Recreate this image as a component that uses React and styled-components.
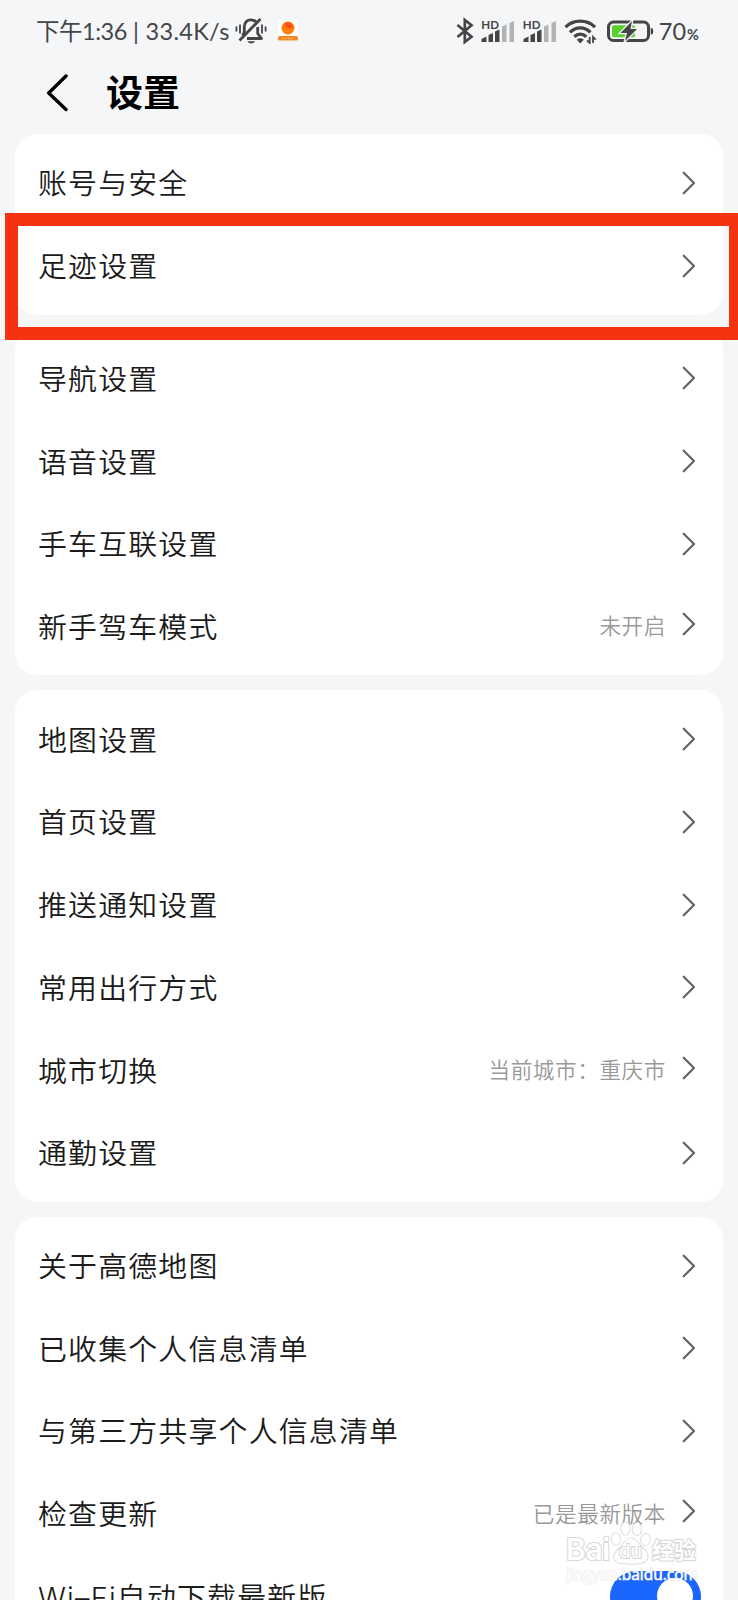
import React from 'react';
import styled, { createGlobalStyle } from 'styled-components';

const GlobalStyle = createGlobalStyle`
  * {
    box-sizing: border-box;
  }

  body {
    margin: 0;
    background-color: #f5f6f8;
  }
`;

const groups = [
  [{ label: '账号与安全' }, { label: '足迹设置' }],
  [
    { label: '导航设置' },
    { label: '语音设置' },
    { label: '手车互联设置' },
    { label: '新手驾车模式', value: '未开启' },
  ],
  [
    { label: '地图设置' },
    { label: '首页设置' },
    { label: '推送通知设置' },
    { label: '常用出行方式' },
    { label: '城市切换', value: '当前城市：重庆市' },
    { label: '通勤设置' },
  ],
  [
    { label: '关于高德地图' },
    { label: '已收集个人信息清单' },
    { label: '与第三方共享个人信息清单' },
    { label: '检查更新', value: '已是最新版本' },
    { label: 'Wi–Fi自动下载最新版', toggle: true },
  ],
];

const MutedBell = () => (
  <svg width="32" height="28" viewBox="0 0 32 28" fill="none" stroke="#444547" strokeWidth="2.8" strokeLinejoin="round">
    <path d="M7.5 18.5 9.3 15.5V10C9.3 5.5 12 2.8 16 2.8c2.3 0 4 .8 5.2 2.2" />
    <path d="M12 21.5h14.5l-3.8-5V10" />
    <path d="M25.5 2 4.5 23.5" />
    <path d="M12.5 24.3h7.5c-1 2.8-6.5 2.8-7.5 0z" fill="#444547" stroke="none" />
    <path d="M1.4 9.5v5M5 7.5v9M27 7.5v9M30.6 9.5v5" strokeWidth="1.8" />
  </svg>
);

const AppBadge = () => (
  <svg width="22" height="22" viewBox="0 0 22 22">
    <rect width="20" height="20" x="1" y="1" fill="#fff" />
    <circle cx="11" cy="8" r="6.5" fill="#ff7c0a" />
    <path d="M8 3c4-1.500 7 0 7.500 4-2 2-5 1.500-7-1z" fill="#fb4c12" />
    <rect width="20" height="4.5" x="1" y="16" fill="#f6861e" rx="1.5" />
    <path d="M5 18.5h12" stroke="#ffc58c" strokeWidth="1" strokeDasharray="2 1" />
  </svg>
);

const Bluetooth = () => (
  <svg width="18" height="28" viewBox="0 0 18 28" fill="none" stroke="#444547" strokeWidth="2.7">
    <path d="M1.500 8 15.500 19.800l-6.700 5.200V3l6.700 5.200L1.500 20" />
  </svg>
);

const Signal = () => (
  <svg width="34" height="26" viewBox="0 0 34 26">
    <g fill="#444547">
      <path d="M.5 24v-3l5-2.500V24zM7.500 24v-7l4.500-2v9zM14 24V13.500l4.500-2V24z" />
    </g>
    <path d="M21 24V8.500L25.500 6.500V24zM28.500 24V5L33 3v21z" fill="#b2b3b5" />
  </svg>
);

const Wifi = () => (
  <svg width="33" height="26" viewBox="0 0 33 26" fill="none" stroke="#444547" strokeWidth="3.3">
    <path d="M1.500 9.200c8-8 21.500-8 29.500 0" />
    <path d="M6 14.300c6-6 14.500-6 20.500 0" />
    <path d="M10.300 18.800c3.700-3.500 8.300-3.500 12 0" />
    <path d="M12.800 21.800c2-2 5-2 7 0l-3.500 3.700z" fill="#444547" stroke="none" />
    <path d="M25.700 19v6l-2.700-2.700M29 25v-6l2.700 2.700" strokeWidth="1.800" />
  </svg>
);

const Battery = () => (
  <svg width="47" height="24" viewBox="0 0 47 24">
    <rect x="1.5" y="3" width="40" height="18.5" rx="5" fill="none" stroke="#444547" strokeWidth="3" />
    <rect x="5" y="6.3" width="23" height="12" rx="2" fill="#5bd02b" />
    <path d="M43.700 9c2 0 2.500 1 2.500 3.200s-.5 3.200-2.500 3.200z" fill="#444547" />
    <path d="M25 2 13.500 14h6.500l-2 8L30 10h-6.500z" fill="#444547" stroke="#f5f6f8" strokeWidth="2.5" paintOrder="stroke" />
  </svg>
);

const BackArrow = () => (
  <svg width="22" height="38" viewBox="0 0 22 38" fill="none" stroke="#000" strokeWidth="3.4" strokeLinecap="round" strokeLinejoin="round">
    <path d="M20 2 2.700 19 20 35.500" />
  </svg>
);

const Chevron = () => (
  <svg width="14" height="24" viewBox="0 0 14 24" fill="none" stroke="#626365" strokeWidth="2.2" strokeLinecap="round" strokeLinejoin="round">
    <path d="M1.700 1.700 12 12 1.700 22.300" />
  </svg>
);

const Paw = () => (
  <svg width="42" height="44" viewBox="0 0 42 44" fill="#fff" fillOpacity=".6" stroke="#d6d6d6" strokeWidth="1.2">
    <ellipse cx="15.5" cy="7.5" rx="4.5" ry="6.5" />
    <ellipse cx="27" cy="8" rx="4.5" ry="6.5" />
    <ellipse cx="6" cy="18" rx="4.7" ry="6" />
    <ellipse cx="35.5" cy="18.5" rx="4.7" ry="6" />
    <path d="M21 17c-5 0-7 5-10.500 8.500S2.500 33 4 38c1.500 4.500 8 5 17 5s14.500-.5 16.500-5c1.700-5-2.500-9-6-12.500S26 17 21 17z" />
  </svg>
);

const App = () => (
  <Page>
    <GlobalStyle />
    <StatusBar>
      <StatusText>
        <Time>下午1:36</Time> | 33.4K/s
      </StatusText>
      <MutedBell />
      <BadgeSlot>
        <AppBadge />
      </BadgeSlot>
      <StatusIcons>
        <Bluetooth />
        <SignalBox>
          <HdLabel>HD</HdLabel>
          <Signal />
        </SignalBox>
        <SignalBox>
          <HdLabel>HD</HdLabel>
          <Signal />
        </SignalBox>
        <Wifi />
        <BatterySlot>
          <Battery />
        </BatterySlot>
      </StatusIcons>
      <BatteryText>
        70<small>%</small>
      </BatteryText>
    </StatusBar>
    <Header>
      <BackArrow />
      <Title>设置</Title>
    </Header>
    <List>
      {groups.map((rows, index) => (
        <Card key={index}>
          {rows.map((row) => (
            <Row key={row.label}>
              <Label>{row.label}</Label>
              {row.value && <Value>{row.value}</Value>}
              {row.toggle ? (
                <Toggle>
                  <Knob />
                </Toggle>
              ) : (
                <ChevronSlot $raised={Boolean(row.value)}>
                  <Chevron />
                </ChevronSlot>
              )}
            </Row>
          ))}
        </Card>
      ))}
    </List>
    <Highlight />
    <Watermark>
      <WatermarkLogo>
        <WatermarkWord>Bai</WatermarkWord>
        <PawBox>
          <Paw />
          <PawText>du</PawText>
        </PawBox>
        <WatermarkChinese>经验</WatermarkChinese>
      </WatermarkLogo>
      <WatermarkUrl>jingyan.baidu.com</WatermarkUrl>
    </Watermark>
  </Page>
);

const Page = styled.div`
  position: relative;
  width: 738px;
  height: 1600px;
  overflow: hidden;
  background-color: #f5f6f8;
  color: #1b1b1b;
  font-family: Inter, 'Noto Sans CJK SC', sans-serif;
`;

const StatusBar = styled.div`
  display: flex;
  align-items: center;
  height: 60px;
  padding: 1px 39px 0 36px;
  color: #444547;

  svg {
    display: block;
    flex-shrink: 0;
  }
`;

const StatusText = styled.span`
  width: 199px;
  font-family: Lato, 'Noto Sans CJK SC', sans-serif;
  font-size: 23.5px;
  letter-spacing: 0.3px;
  line-height: 32px;
  white-space: nowrap;
`;

const Time = styled.span`
  letter-spacing: -0.5px;
`;

const BadgeSlot = styled.span`
  margin-left: 10px;
`;

const StatusIcons = styled.div`
  display: flex;
  align-items: center;
  gap: 7.5px;
  margin-left: auto;
`;

const SignalBox = styled.div`
  position: relative;
`;

const HdLabel = styled.span`
  position: absolute;
  top: 0;
  left: 0;
  font-family: Lato, sans-serif;
  font-size: 11.5px;
  font-weight: bold;
  line-height: 13px;
`;

const BatterySlot = styled.span`
  margin-left: 2px;
`;

const BatteryText = styled.span`
  margin-left: 5px;
  font-family: Lato, sans-serif;
  font-size: 23.5px;

  small {
    margin-left: 1px;
    font-size: 14.5px;
    font-weight: bold;
  }
`;

const Header = styled.header`
  display: flex;
  align-items: center;
  height: 65px;
  padding-left: 46px;
  gap: 38px;
`;

const Title = styled.h1`
  margin: 0;
  padding-top: 3px;
  font-size: 37px;
  font-weight: bold;
  line-height: 56px;
  color: #000;
`;

const List = styled.main`
  display: flex;
  flex-direction: column;
  gap: 14.8px;
  padding: 8.8px 15px 0;
`;

const Card = styled.section`
  padding: 7.7px 0;
  border-radius: 22px;
  background-color: #fff;
`;

const Row = styled.div`
  display: flex;
  align-items: center;
  height: 82.7px;
  padding: 0 27px 0 23px;
`;

const Label = styled.span`
  flex: 1;
  padding-top: 3px;
  font-size: 28.9px;
  font-weight: 350;
  letter-spacing: 1.2px;
  line-height: 40px;
  white-space: nowrap;
`;

const Value = styled.span`
  margin-right: 16px;
  font-size: 21.6px;
  font-weight: 350;
  letter-spacing: 0.6px;
  line-height: 32px;
  color: #999;
`;

const ChevronSlot = styled.span`
  display: flex;
  margin-bottom: ${(props) => (props.$raised ? '5px' : '0')};
`;

const Toggle = styled.span`
  width: 91px;
  height: 51px;
  padding: 7px 8px;
  margin-right: -5px;
  border-radius: 26px;
  background-color: #1a66ff;
`;

const Knob = styled.span`
  display: block;
  width: 36px;
  height: 36px;
  margin-left: auto;
  border-radius: 50%;
  background-color: #fff;
`;

const Highlight = styled.div`
  position: absolute;
  top: 213px;
  left: 5px;
  width: 737px;
  height: 127px;
  border: 13px solid #f63310;
`;

const Watermark = styled.div`
  position: absolute;
  top: 1521px;
  left: 566px;
  color: #fff;
  -webkit-text-stroke: 2px #d6d6d6;
  paint-order: stroke fill;
`;

const WatermarkLogo = styled.div`
  display: flex;
  align-items: flex-end;
  height: 44px;
`;

const WatermarkWord = styled.span`
  width: 44px;
  padding-bottom: 2px;
  font-family: Inter, sans-serif;
  font-size: 30px;
  font-weight: 600;
  letter-spacing: -0.4px;
  line-height: 28px;
`;

const PawBox = styled.span`
  position: relative;
  width: 42px;
  height: 44px;
`;

const PawText = styled.span`
  position: absolute;
  top: 19px;
  left: 9px;
  font-family: Inter, sans-serif;
  font-size: 19px;
  line-height: 24px;
`;

const WatermarkChinese = styled.span`
  font-size: 22px;
  font-weight: bold;
  line-height: 30px;
`;

const WatermarkUrl = styled.div`
  padding-top: 1px;
  font-family: 'Open Sans', sans-serif;
  font-size: 15.5px;
  line-height: 16px;
  -webkit-text-stroke: 1px rgba(225, 225, 225, 0.8);
`;

export default App;
